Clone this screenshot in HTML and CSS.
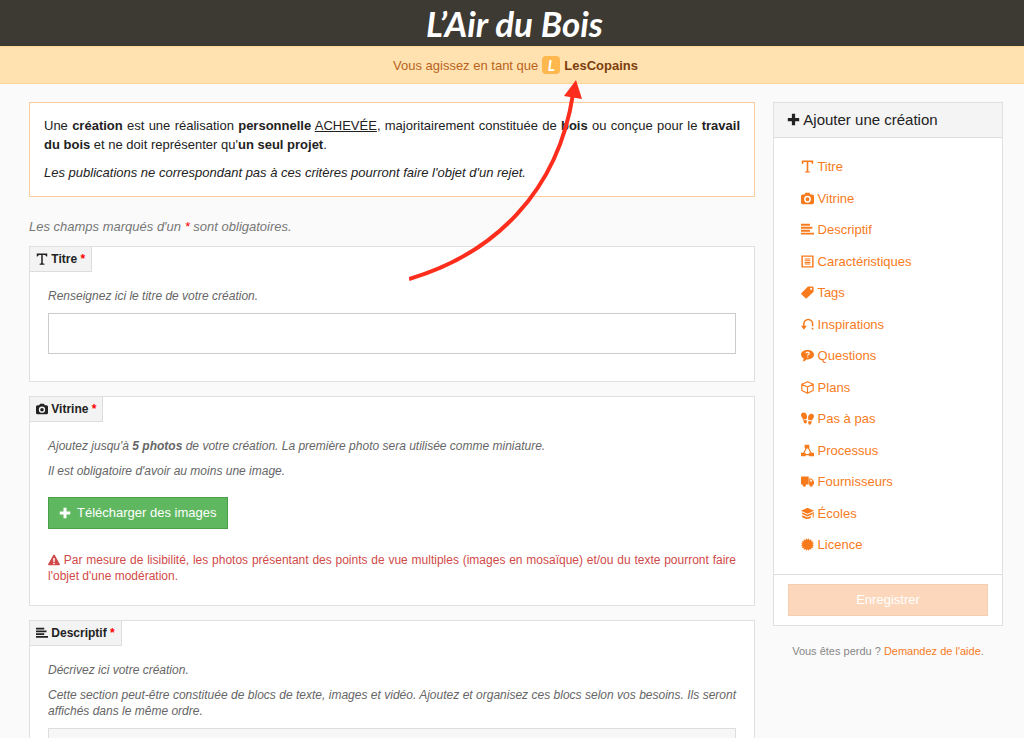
FILE: index.html
```html
<!DOCTYPE html>
<html lang="fr">
<head>
<meta charset="utf-8">
<title>L'Air du Bois - Ajouter une création</title>
<link rel="stylesheet" href="styles.css">
</head>
<body>
<svg class="sprite" aria-hidden="true">
  <symbol id="i-plus" viewBox="0 0 16 16"><path d="M6 1h4v5h5v4h-5v5H6v-5H1V6h5z"/></symbol>
  <symbol id="i-title" viewBox="0 0 16 16"><path d="M1 .5h14v4.300h-1.200q-.4-2.300-2.500-2.300H9v10.700q0 1 2.200 1.200v1.100H4.800v-1.100q2.200-.2 2.200-1.200V2.500H4.700q-2.100 0-2.500 2.300H1z"/></symbol>
  <symbol id="i-camera" viewBox="0 0 16 16"><path fill-rule="evenodd" d="M5.500 1h5l1.200 2H14a2 2 0 0 1 2 2v8a2 2 0 0 1-2 2H2a2 2 0 0 1-2-2V5a2 2 0 0 1 2-2h2.300zM8 4.700a4.200 4.200 0 1 0 0 8.400 4.200 4.200 0 0 0 0-8.400zm0 1.800a2.400 2.400 0 1 1 0 4.800 2.400 2.400 0 0 1 0-4.800z"/></symbol>
  <symbol id="i-lines" viewBox="0 0 16 16"><path d="M0 1h11v2.300H0zM0 4.700h14V7H0zM0 8.400h11v2.300H0zM0 12h16v2.300H0z"/></symbol>
  <symbol id="i-list" viewBox="0 0 16 16"><path fill-rule="evenodd" d="M.5.5h15v15H.5zM2.300 2.300v11.400h11.400V2.300zM4.500 4.300h7v1.200h-7zM4.500 6.400h7v1.200h-7zM4.500 8.500h7v1.200h-7zM4.500 10.600h7v1.200h-7z"/></symbol>
  <symbol id="i-tag" viewBox="0 0 16 16"><path fill-rule="evenodd" d="M8.500.5H14A1.500 1.500 0 0 1 15.500 2v5L7 15.200q-.7.600-1.400 0L.5 10.300q-.7-.7 0-1.400zM12.500 2.200a1.300 1.300 0 1 0 0 2.600 1.300 1.300 0 0 0 0-2.600z"/></symbol>
  <symbol id="i-inspire" viewBox="0 0 16 16"><path d="M3.500 10V7.200a5.400 5.400 0 0 1 10.800 0V10" fill="none" stroke="currentColor" stroke-width="1.900"/><path d="M0 9.500h7.200L3.500 14.500zM13.200 12h2v2h-2z"/></symbol>
  <symbol id="i-question" viewBox="0 0 16 16"><path d="M8 1.200c4.500 0 8 2.400 8 5.700s-3.500 5.900-8 5.900h-1.300Q4.800 15 2 15.300q1.300-1.500 1.200-3.700Q0 10 0 6.900c0-3.300 3.500-5.700 8-5.700z"/><path d="M6 5.300q.3-1.500 2.200-1.500 2 0 2 1.500 0 1-1.100 1.500-.9.400-.9 1.200M8.200 9.100v1.500" fill="none" stroke="#fff" stroke-width="1.400"/></symbol>
  <symbol id="i-cube" viewBox="0 0 16 16"><path d="M8 .8l7 3.200v7.800l-7 3.400-7-3.400V4zM1 4l7 3.300L15 4M8 7.300v7.900" fill="none" stroke="currentColor" stroke-width="1.400" stroke-linejoin="round"/></symbol>
  <symbol id="i-steps" viewBox="0 0 16 16"><path d="M3.200.5c2.600 0 4.200 2.700 4.200 5.200 0 1.300-.5 2.200-.5 3l-4.300.7C2.200 7.500 0 6.200 0 3.700 0 1.800 1.300.5 3.200.5zM2.800 10.300l4-.6q.9 4.200-1.300 4.400-2.300 0-2.700-3.800zM12.900 2C10.300 2 8.700 4.500 8.700 7c0 1 .4 1.800.5 2.900l4.200.6c.5-1.700 2.600-2.900 2.600-5.200C16 3.200 14.800 2 12.900 2zM9.200 11.200l4 .6q-.6 4.100-2.800 3.900-2.100-.3-1.200-4.500z"/></symbol>
  <symbol id="i-flow" viewBox="0 0 16 16"><path d="M4.500.8h5.700v4.700H4.500zM0 10.800h5.700v4.400H0zM9.800 10.800H16v4.400H9.800z"/><path d="M6.500 5L3 12M9 5l4 7M5 13h5" fill="none" stroke="currentColor" stroke-width="1.400"/></symbol>
  <symbol id="i-truck" viewBox="0 0 16 16"><path fill-rule="evenodd" d="M1 1.800h8.500v9.900H1a1 1 0 0 1-1-1V2.800a1 1 0 0 1 1-1zM10 4.300h3l3 3.300v4.200h-6zM11.300 5.500v2.400h3l-1.900-2.400z"/><circle cx="4" cy="12.300" r="2.200"/><circle cx="12.500" cy="12.300" r="2.200"/></symbol>
  <symbol id="i-school" viewBox="0 0 16 16"><path d="M8 1l8 3.700-8 3.700-8-3.700zM1.500 6.500L8 9.500l6-2.700v2L8 11.700l-6.500-3zM1.500 10L8 13l4-1.900v2.200Q8 16 4 13.800l-2.500-1.300zM14.400 6h1.200v7h-1.200z"/></symbol>
  <symbol id="i-seal" viewBox="0 0 16 16"><path d="M8 2.300L9.500.3l.9 2.400 2.300-1.200-.1 2.500 2.600-.1-1.200 2.300 2.200.8L14.200 8l2 1.300-2.200.7 1.200 2.200-2.600-.1.100 2.500-2.300-1.200-.9 2.400L8 13.800l-1.500 2-.9-2.400-2.300 1.200.1-2.500-2.600.1L2 10l-2.200-.7 2-1.300-2-1 2.200-.8L.8 3.900l2.600.1-.1-2.500 2.300 1.200.9-2.400z"/></symbol>
  <symbol id="i-warning" viewBox="0 0 16 16"><path fill-rule="evenodd" d="M8 .5q.6 0 1 .7l6.800 12.600q.5 1.200-.8 1.200H1q-1.300 0-.8-1.200L7 1.200q.4-.7 1-.7zM6.800 5.500l.4 5h1.600l.4-5zM7 11.500v2h2v-2z"/></symbol>
</svg>

<div class="page">
  <header class="brand"><a class="brand-link" href="#">L’Air du Bois</a></header>
  <div class="acting">Vous agissez en tant que <span class="avatar">L</span> <strong>LesCopains</strong></div>

  <div class="layout">
    <main class="main">
      <section class="intro">
        <p>Une <strong>création</strong> est une réalisation <strong>personnelle</strong> <u>ACHEVÉE</u>, majoritairement constituée de <strong>bois</strong> ou conçue pour le <strong>travail du bois</strong> et ne doit représenter qu'<strong>un seul projet</strong>.</p>
        <p><em>Les publications ne correspondant pas à ces critères pourront faire l'objet d'un rejet.</em></p>
      </section>
      <p class="required-note">Les champs marqués d'un <span class="star">*</span> sont obligatoires.</p>

      <section class="card">
        <label class="tab" for="titre"><svg class="icon"><use href="#i-title"/></svg> Titre <span class="star">*</span></label>
        <div class="card-body card-body-field">
          <p class="help">Renseignez ici le titre de votre création.</p>
          <input class="field" id="titre" type="text">
        </div>
      </section>

      <section class="card">
        <h2 class="tab"><svg class="icon"><use href="#i-camera"/></svg> Vitrine <span class="star">*</span></h2>
        <div class="card-body">
          <p class="help">Ajoutez jusqu'à <strong>5 photos</strong> de votre création. La première photo sera utilisée comme miniature.</p>
          <p class="help">Il est obligatoire d'avoir au moins une image.</p>
          <button class="upload" type="button"><svg class="icon"><use href="#i-plus"/></svg>Télécharger des images</button>
          <p class="warning"><svg class="icon"><use href="#i-warning"/></svg> Par mesure de lisibilité, les photos présentant des points de vue multiples (images en mosaïque) et/ou du texte pourront faire l'objet d'une modération.</p>
        </div>
      </section>

      <section class="card">
        <h2 class="tab"><svg class="icon"><use href="#i-lines"/></svg> Descriptif <span class="star">*</span></h2>
        <div class="card-body">
          <p class="help">Décrivez ici votre création.</p>
          <p class="help">Cette section peut-être constituée de blocs de texte, images et vidéo. Ajoutez et organisez ces blocs selon vos besoins. Ils seront affichés dans le même ordre.</p>
          <div class="blocks"></div>
        </div>
      </section>
    </main>

    <aside class="side">
      <div class="panel">
        <h1 class="panel-title"><svg class="icon"><use href="#i-plus"/></svg> Ajouter une création</h1>
        <ul class="nav">
          <li><a href="#"><svg class="icon"><use href="#i-title"/></svg> Titre</a></li>
          <li><a href="#"><svg class="icon"><use href="#i-camera"/></svg> Vitrine</a></li>
          <li><a href="#"><svg class="icon"><use href="#i-lines"/></svg> Descriptif</a></li>
          <li><a href="#"><svg class="icon"><use href="#i-list"/></svg> Caractéristiques</a></li>
          <li><a href="#"><svg class="icon"><use href="#i-tag"/></svg> Tags</a></li>
          <li><a href="#"><svg class="icon"><use href="#i-inspire"/></svg> Inspirations</a></li>
          <li><a href="#"><svg class="icon"><use href="#i-question"/></svg> Questions</a></li>
          <li><a href="#"><svg class="icon"><use href="#i-cube"/></svg> Plans</a></li>
          <li><a href="#"><svg class="icon"><use href="#i-steps"/></svg> Pas à pas</a></li>
          <li><a href="#"><svg class="icon"><use href="#i-flow"/></svg> Processus</a></li>
          <li><a href="#"><svg class="icon"><use href="#i-truck"/></svg> Fournisseurs</a></li>
          <li><a href="#"><svg class="icon"><use href="#i-school"/></svg> Écoles</a></li>
          <li><a href="#"><svg class="icon"><use href="#i-seal"/></svg> Licence</a></li>
        </ul>
        <div class="panel-foot"><button class="save" type="submit" disabled>Enregistrer</button></div>
      </div>
      <p class="lost">Vous êtes perdu ? <a href="#">Demandez de l'aide</a>.</p>
    </aside>
  </div>

  <svg class="arrow" viewBox="0 0 176 202" aria-hidden="true">
    <path d="M0 199C85 174 149 112 164 14" fill="none" stroke="#fc2d1c" stroke-width="4"/>
    <path d="M167 0L155 16 173 19z" fill="#fc2d1c"/>
  </svg>
</div>
</body>
</html>
```
FILE: styles.css
```css
* { box-sizing: border-box; }

body {
  margin: 0;
  background: #fafafa;
  color: #222;
  font-family: "Liberation Sans", Arial, sans-serif;
  font-size: 13px;
  line-height: 19px;
}

p, h1, h2, ul { margin: 0; padding: 0; }

a { color: #f77b1c; text-decoration: none; }

.sprite { display: none; }

.icon {
  width: 12px;
  height: 12px;
  fill: currentColor;
  vertical-align: -2px;
}

.page {
  position: relative;
  height: 100vh;
  overflow: hidden;
}

.brand {
  height: 46px;
  padding-left: 5px;
  background: #3d3933;
  text-align: center;
}

.brand-link {
  color: #fff;
  font-family: Lato, "Liberation Sans", sans-serif;
  font-size: 35px;
  font-style: italic;
  font-weight: 700;
  line-height: 46px;
}

.acting {
  display: flex;
  align-items: center;
  justify-content: center;
  gap: 4px;
  height: 38px;
  padding-left: 7px;
  border-top: 1px solid #ffd596;
  border-bottom: 1px solid #ffd596;
  background: #ffe2b0;
  color: #b9621d;
}

.acting strong { color: #7d3d0c; }

.avatar {
  width: 18px;
  height: 18px;
  border-radius: 4px;
  background: #ffb84d;
  color: #fff;
  font-family: Lato, sans-serif;
  font-size: 15px;
  font-style: italic;
  font-weight: 700;
  line-height: 18px;
  text-align: center;
}

.layout {
  display: grid;
  grid-template-columns: minmax(0, 1fr) 230px;
  align-items: start;
  gap: 18px;
  padding: 18px 21px 0 29px;
}

.intro {
  display: grid;
  gap: 9px;
  padding: 13px 14px 14px;
  border: 1px solid #fbcd98;
  background: #fff;
  text-align: justify;
}

.required-note {
  margin: 20px 0 10px;
  color: #777;
  font-style: italic;
}

.star { color: #f00; }

.card {
  margin-bottom: 14px;
  border: 1px solid #e0e0e0;
  background: #fff;
}

.tab {
  display: block;
  width: fit-content;
  height: 25px;
  padding: 0 6px;
  border-right: 1px solid #ddd;
  border-bottom: 1px solid #ddd;
  background: #f3f3f3;
  font-size: 12px;
  font-weight: 700;
  line-height: 24px;
}

.card-body {
  padding: 16px 18px 21px;
  font-size: 12px;
  line-height: 16px;
}

.card-body-field { padding-bottom: 27px; }

.help {
  margin-bottom: 9px;
  color: #666;
  font-style: italic;
  text-align: justify;
}

.field {
  display: block;
  width: 100%;
  height: 41px;
  padding: 8px;
  border: 1px solid #ccc;
  background: #fff;
  font: inherit;
}

.upload {
  display: flex;
  align-items: center;
  gap: 6px;
  height: 32px;
  margin: 18px 0 23px;
  padding: 0 11px 0 10px;
  border: 1px solid #4a9f4a;
  background: #5fb760;
  color: #fff;
  font: inherit;
  font-size: 13px;
}

.warning {
  color: #d04a49;
  text-align: justify;
}

.blocks {
  height: 60px;
  border: 1px solid #ddd;
  background: #f7f7f7;
}

.panel {
  border: 1px solid #e0e0e0;
  background: #fff;
}

.panel-title {
  padding: 0 13px;
  border-bottom: 1px solid #ddd;
  background: #f4f4f4;
  font-size: 15px;
  font-weight: 400;
  line-height: 34px;
}

.panel-title .icon {
  width: 13px;
  height: 13px;
  vertical-align: -1px;
}

.nav {
  padding: 13px 27px;
  list-style: none;
  line-height: 1.5;
}

.nav a {
  display: block;
  padding: 6px 0;
}

.nav .icon { width: 13px; height: 13px; }

.panel-foot {
  padding: 9px 14px;
  border-top: 1px solid #ddd;
}

.save {
  display: block;
  width: 100%;
  height: 32px;
  border: 1px solid #f6cfae;
  background: #fcd7bc;
  color: #fff;
  font: inherit;
}

.lost {
  margin-top: 16px;
  color: #888;
  font-size: 11px;
  text-align: center;
}

.arrow {
  position: absolute;
  top: 80px;
  left: calc(50% - 103px);
  width: 176px;
  height: 202px;
  pointer-events: none;
}
```
